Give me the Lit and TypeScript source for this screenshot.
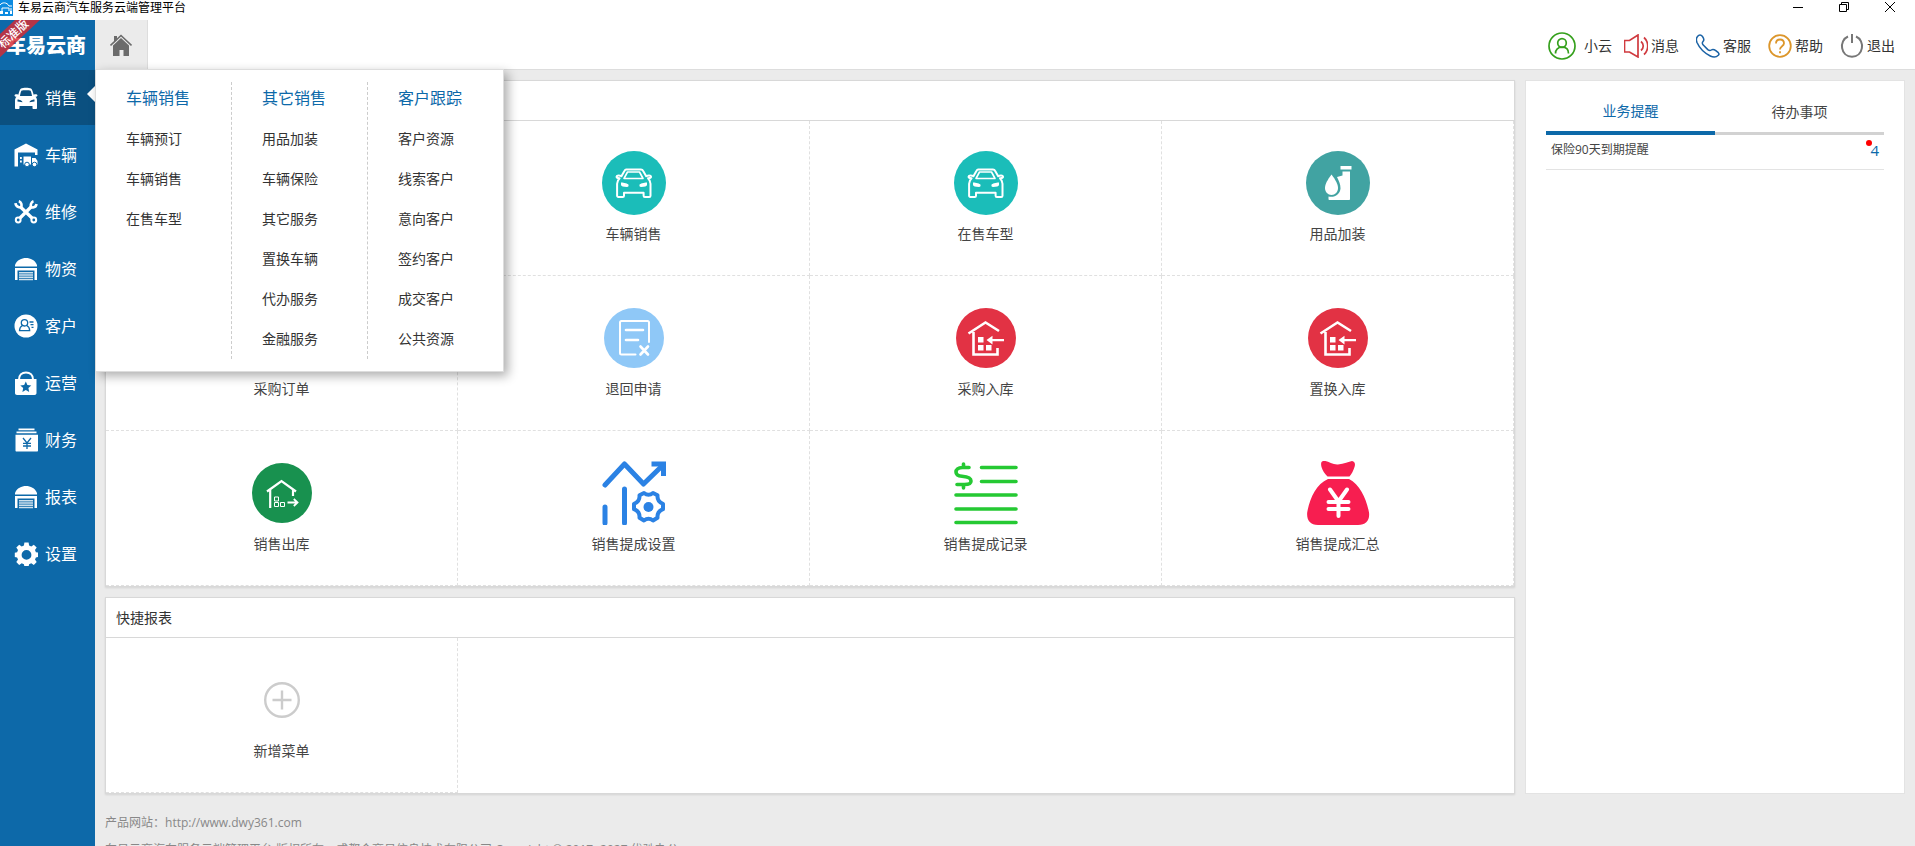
import { LitElement, html, css, svg, TemplateResult } from "lit";
import { customElement, state } from "lit/decorators.js";
import { classMap } from "lit/directives/class-map.js";

/* ---------- sidebar icons, drawn on a 24px grid ---------- */
const garage = svg`
  <path fill="#fff" d="M1 8C3 3 7.500 1 12 1s9 2 11 7v1.500H1zM1 11h22v12h-2.500v-9.500h-17V23H1z"/>
  <path stroke="#fff" stroke-width="1.500" d="M5 15.700h14M5 18h14M5 20.300h14M5 22.500h14" opacity=".8"/>`;

const navIcons: Record<string, TemplateResult> = {
  car: svg`<path fill="#fff" fill-rule="evenodd" d="M7 2.500C8 2 10 1.800 12 1.800s4 .2 5 .7c1 .5 2 3.500 2.700 6.200C21.500 8 23.500 8.500 23.500 9.500c0 1-1.200 1.200-2 1.200 1 1 1.500 2 1.500 4V22c0 .6-.4 1-1 1h-2.500c-.6 0-1-.4-1-1v-2h-13v2c0 .6-.4 1-1 1H2c-.6 0-1-.4-1-1v-7.300c0-2 .5-3 1.500-4-.8 0-2-.2-2-1.200 0-1 2-1.500 3.800-.8C5 6 6 3 7 2.500zM7.700 4.500C7 5.200 6.200 8 6 10h12c-.2-2-1-4.800-1.700-5.500-.8-.5-7.800-.5-8.600 0zM3.500 13.500v2l5 .8c0-1.600-3-2.800-5-2.800zm17 0c-2 0-5 1.200-5 2.800l5-.8z"/>`,
  depot: svg`<path fill="#fff" d="M.5 6.500 12 .500l11.500 6V12H21V9.500H4V23.500H.5z"/>
    <path fill="#fff" d="M6 14h1.800v2H6zM6 17.500h1.800v2H6zM9.500 13.500h7.500v8H9.500zM18 15h3.500l2 3v3.500H18z"/>
    <circle cx="13" cy="21.500" r="2.300" fill="#fff" stroke="#0d69a9"/><circle cx="20.500" cy="21.500" r="2.300" fill="#fff" stroke="#0d69a9"/>`,
  tools: svg`<g fill="none" stroke="#fff"><path stroke-width="3.200" d="M6 6.500 18 18M18 6 6 18"/>
    <circle cx="4.200" cy="20" r="2.400" stroke-width="2"/><circle cx="19.800" cy="20" r="2.400" stroke-width="2"/>
    <path stroke-width="2.600" d="M1.500 3.200C1.800 7.500 6.800 8 7.300 6.500S7.500 2 4.800 1.200M22.500 4C22 8 17.500 8 17 6.500S17 2 19.500 1.200"/></g>`,
  garage,
  client: svg`<circle cx="12" cy="12" r="11.500" fill="#fff"/>
    <g fill="none" stroke="#0d69a9" stroke-width="1.300"><circle cx="10.500" cy="8.800" r="3.200"/>
    <path d="M8.500 11.500c-2 1-3 2.800-3 5.200h10.200c0-2.400-1-4.200-3-5.200M15.500 8h4M16.500 10.700h3M17.500 13.400h2"/></g>`,
  bag: svg`<path fill="none" stroke="#fff" stroke-width="2" d="M5 8.500C5 4 8 1.500 12 1.500s7 2.500 7 7"/>
    <path fill="#fff" d="M1 8h21.500v14c0 1.200-.8 2-2 2H3c-1.200 0-2-.8-2-2z"/>
    <path fill="#0d69a9" d="m11.800 10.500 1.600 3.600 3.900.4-2.900 2.600.8 3.900-3.400-2-3.400 2 .8-3.900-2.900-2.600 3.900-.4z"/>`,
  money: svg`<path fill="#fff" d="M4.500.5h16v1.800h-16zM2.500 3.500h20v1.800h-20zM1.500 6.700h22.500v15.800c0 .6-.4 1-1 1H2.500c-.6 0-1-.4-1-1z"/>
    <path fill="none" stroke="#0d69a9" stroke-width="1.300" d="m9 10 4 5 4-5M13 15v6M9 15.300h8M9 18h8"/>`,
  gear: svg`<path fill="#fff" fill-rule="evenodd" d="M10.400.5h4.200l.5 3 2.200.9 2.500-1.700 2.900 2.900-1.700 2.500.9 2.200 2.600.4v4.200l-2.600.5-.9 2.200 1.700 2.500-2.900 2.900-2.500-1.700-2.200.9-.5 2.300h-4.200l-.5-2.300-2.200-.9-2.500 1.700-2.900-2.900L4 17.600l-.9-2.200L.8 15v-4.200l2.300-.5L4 8.100 2.300 5.600l2.900-2.900 2.500 1.700 2.200-.9zM12.500 8a4.900 4.900 0 1 0 0 9.800 4.900 4.900 0 0 0 0-9.800z"/>`,
};

/* ---------- shortcut icons, drawn on a 64px grid ---------- */
const tealCar = svg`<circle cx="32" cy="32" r="32" fill="#1bbdb9"/>
  <g fill="none" stroke="#fff" stroke-width="2" stroke-linejoin="round">
    <path d="M24 18.500h15c1 0 1.700.5 2.200 1.500l3 5.200c1.800-1 4.500-1 4.800.3.300 1.500-1.200 1.500-3 1.700 2.300 2.300 2.500 3 2.500 5.500v12c0 .7-.5 1.200-1.200 1.200h-4.500c-.7 0-1.200-.5-1.200-1.200v-3H22v3c0 .7-.5 1.200-1.200 1.200h-4.500c-.7 0-1.200-.5-1.200-1.200v-12c0-2.500.2-3.200 2.500-5.500-1.800-.2-3.300-.2-3-1.700.3-1.300 3-1.300 4.800-.3l3-5.200c.5-1 1.100-1.500 1.800-1.500z"/>
    <path d="M25.500 21h12l3.500 6.500H22z" stroke-width="1.600"/></g>
  <path fill="#fff" d="M19 31.500c3 .2 7 1 7.500 2.200.3 1.300-.3 2.300-1.500 2.300-3.500 0-6-.8-6-2zM45 31.500c-3 .2-7 1-7.500 2.200-.3 1.300.3 2.300 1.500 2.300 3.500 0 6-.8 6-2z"/>`;

const houseIn = svg`<circle cx="32" cy="32" r="30" fill="#e23244"/>
  <path fill="none" stroke="#fff" stroke-width="2.600" d="M14.500 27.500 31.500 16.500 45 25M19.500 26v22.500h24V42"/>
  <path fill="#fff" d="M24 31h5.500v5.500H24zM24 39h5.500v5.500H24zM32 39h5.500v5.500H32zM32.500 34l6-4.300v3.200H50v2.300H38.500v3.200z"/>`;

const tileIcons: Record<string, TemplateResult> = {
  tealCar,
  houseIn,
  oil: svg`<circle cx="32" cy="32" r="32" fill="#41a3a2"/>
    <path fill="#fff" d="M34.500 15h11v3.500h-11zM36.500 20.500H44V48c0 .6-.4 1-1 1H23.500c-.6 0-1-.4-1-1v-2.500c6 1.500 11.500-2 12-8 0-4-1.500-7.500-3.500-11.500l5.500-1.500z"/>
    <path fill="#fff" d="M25.500 23.500c4 5.500 6.500 9.500 6.500 13.500s-2.900 7-6.500 7-6.500-3-6.500-7 2.500-8 6.500-13.500z"/>`,
  order: svg`<circle cx="32" cy="32" r="30" fill="#8fc8f7"/><path fill="none" stroke="#fff" stroke-width="2" d="M18 15h28v33H18zM24 24h16M24 32h16"/>`,
  refund: svg`<circle cx="32" cy="32" r="30" fill="#8fc8f7"/>
    <g fill="none" stroke="#fff" stroke-linecap="round"><path stroke-width="2" d="M33.500 48.500H19.500c-.8 0-1.500-.7-1.500-1.500V16.500c0-.8.7-1.500 1.500-1.500h26c.8 0 1.500.7 1.500 1.500V36"/>
    <path stroke-width="2.600" d="M24 24h17M24 34h12M38.500 40.500l7.500 8M46 40.500l-7.500 8"/></g>`,
  houseOut: svg`<circle cx="32" cy="32" r="30" fill="#18914f"/>
    <path fill="none" stroke="#fff" stroke-width="2.200" d="M17 30.500 31.500 20 46 30.500M20.200 29v18M43 29v6"/>
    <path fill="none" stroke="#fff" stroke-width="1" d="M24.500 36h4v4h-4zM24.500 41.500h4v4h-4zM30.500 41.500h4v4h-4z"/>
    <path fill="none" stroke="#fff" stroke-width="1.800" d="M37.500 41.500H47.500M43.800 38l3.700 3.500-3.700 3.500"/>`,
  trend: svg`<g fill="none" stroke="#2b82e4" stroke-linecap="round" stroke-width="5">
    <path stroke-linejoin="round" d="M3 24 22.500 3 41.500 23 60 5"/><path stroke-linecap="butt" d="M49.500 3h12v12"/>
    <path d="M3 46v16M22.500 28v34"/>
    <path stroke-width="4" stroke-linejoin="round" d="M42 28.500q4.500 3.500 9 0l4.500 2.300q-.5 6.500 5.500 8.500v5.400q-6 2.300-5.500 8.500l-4.500 2.800q-4.500-3.500-9 0l-4.500-2.800q.5-6.200-5.500-8.500v-5.400q6-2 5.500-8.500z" transform="translate(0 3.500)"/></g>
    <circle cx="46.500" cy="46" r="5" fill="#2b82e4"/>`,
  ledger: svg`<g fill="none" stroke="#25c933" stroke-linecap="round" stroke-width="3.600">
    <path d="M27.500 6.500H62M27.500 20.500H62M2 34h60M2 48h60M2 61.500h60"/>
    <path d="M15 6.500H8.500C4 6.500 2 8.500 2 11s2 4 6 4.300c5.500.4 9 1.500 9 4.700s-2.500 3.500-6.500 3.500H3M9.500 3v3.500M9.500 23.500V27"/></g>`,
  sack: svg`<path fill="#f71e50" d="M17 0c4-1 9 4 15 3.500S43 .500 46 0c3 .5 3.500 3 2.500 6-1 3.500-3 7-5 9.500h-22c-3-3-5-6-6-9.500-.8-3-.5-5.500 1.500-6zM22 18h21c11 5.500 17.500 20 20 33.500C64 59 60 64 52 64H12C4 64 .500 59 1.200 51.500 3.500 38 10 23 22 18z"/>
    <path fill="none" stroke="#fff" stroke-width="4" stroke-linecap="round" d="m24 28.500 8.500 12 8.500-12M32.500 41v14M22.500 41h20M22.500 48h20"/>`,
  plus: svg`<g fill="none" stroke="#ccc" stroke-width="2.400"><circle cx="32" cy="32" r="16.800"/><path d="M22.500 32h19M32 22.500v19"/></g>`,
};

const toolIcons: Record<string, TemplateResult> = {
  user: svg`<g fill="none" stroke="#35a01c" stroke-width="1.700"><circle cx="14" cy="14" r="13"/><circle cx="14" cy="11" r="4.300"/>
    <path d="M7.500 21.500c0-4 2.500-6.300 6.500-6.300s6.500 2.300 6.500 6.300"/></g>`,
  sound: svg`<path fill="none" stroke="#d03a3f" stroke-width="1.700" d="M.5 6.500h5L14 1v22L5.500 18H.5zM17 7.500c3 2.500 3 6.500 0 9M20 3.500c5 4.500 5 12.500 0 17"/>`,
  phone: svg`<path fill="none" stroke="#1a62a5" stroke-width="1.500" stroke-linejoin="round" d="M1.500 2.500C3 .500 5 .500 6.500 2.500s2 3.500.5 5c-1 1-1 1.800 0 3.300l4.800 4.800c1.500 1.200 2.500 1.200 3.500.4 1.500-1 3-.5 4.500.7l2.500 2c1 1 .8 1.800 0 2.600-2 2-5 2.200-8 .7C7.500 18.500 3 13 1 8.500 0 6 .2 4 1.500 2.500z"/>`,
  help: svg`<g fill="none" stroke="#dc962b" stroke-width="1.800"><circle cx="12" cy="12" r="10.800"/><path d="M8 9.500C8 7 9.500 5.500 12 5.500s4 1.500 4 3.800c0 3-4 3-4 6.200M12 17.300v2"/></g>`,
  power: svg`<path fill="none" stroke="#777" stroke-width="2" d="M8 2.500C-1.500 6.500.5 22.700 12 22.700S25.500 6.500 16 2.500M12 0v9"/>`,
};

const navItems = [
  ["car", "销售"], ["depot", "车辆"], ["tools", "维修"], ["garage", "物资"], ["client", "客户"],
  ["bag", "运营"], ["money", "财务"], ["garage", "报表"], ["gear", "设置"],
];

const submenu = [
  { title: "车辆销售", links: ["车辆预订", "车辆销售", "在售车型"] },
  { title: "其它销售", links: ["用品加装", "车辆保险", "其它服务", "置换车辆", "代办服务", "金融服务"] },
  { title: "客户跟踪", links: ["客户资源", "线索客户", "意向客户", "签约客户", "成交客户", "公共资源"] },
];

const shortcuts = [
  ["tealCar", "车辆预订"], ["tealCar", "车辆销售"], ["tealCar", "在售车型"], ["oil", "用品加装"],
  ["order", "采购订单"], ["refund", "退回申请"], ["houseIn", "采购入库"], ["houseIn", "置换入库"],
  ["houseOut", "销售出库"], ["trend", "销售提成设置"], ["ledger", "销售提成记录"], ["sack", "销售提成汇总"],
];

const tools = [["sound", "消息"], ["phone", "客服"], ["help", "帮助"], ["power", "退出"]];

@customElement("app-root")
export class AppRoot extends LitElement {
  @state() private activeNav = 0;
  @state() private activeTab = 0;

  static styles = css`
    :host {
      display: flex;
      flex-direction: column;
      height: 100vh;
      overflow: hidden;
      background: #ebebeb;
      color: #333;
      font: 14px/20px "Open Sans", "Noto Sans CJK SC", sans-serif;
    }
    * { box-sizing: border-box; }
    button { border: 0; padding: 0; background: none; font: inherit; color: inherit; cursor: pointer; }
    a { color: inherit; text-decoration: none; }
    h2, h3, p, ul { margin: 0; padding: 0; font-weight: 400; font-size: inherit; list-style: none; }
    svg { display: block; flex: none; }

    .titlebar { display: flex; align-items: center; flex: none; height: 20px; background: #fff; color: #000; font-size: 12px; line-height: 16px; }
    .titlebar .name { flex: 1; padding-left: 5px; padding-bottom: 4px; }
    .titlebar .brand { width: 13px; height: 16px; align-self: flex-start; }
    .win { display: flex; gap: 1px; align-self: flex-start; padding-right: 3px; }
    .win button { width: 45px; height: 14px; display: flex; align-items: center; justify-content: center; }

    .shell { display: flex; flex: 1; min-height: 0; }

    .sidebar { position: relative; z-index: 2; flex: none; width: 95px; background: #0d69a9; color: #fff; }
    .logo { position: relative; display: flex; align-items: center; justify-content: flex-end; height: 50px; padding: 2px 9px 0 0; overflow: hidden; font-size: 20px; line-height: 28px; font-weight: 900; }
    .ribbon { position: absolute; left: -32px; top: 5px; width: 90px; background: rgba(212, 43, 53, 0.84); color: #fff; font-size: 12px; line-height: 17px; font-weight: 500; text-align: center; transform: rotate(-43deg); }
    .nav li { margin-bottom: 2px; }
    .nav button { position: relative; display: flex; align-items: center; gap: 7px; width: 100%; height: 55px; padding-left: 14px; font-size: 16px; line-height: 24px; }
    .nav .on { background: #0b5080; }
    .nav .on::after { content: ""; position: absolute; right: 0; top: 16px; border: 8px solid transparent; border-left: 0; border-right-color: #fff; }

    .submenu { position: absolute; left: 95px; top: 49px; display: flex; padding: 12px 0; background: #fff; border: 1px solid #ddd; box-shadow: 4px 4px 10px rgba(0, 0, 0, 0.32); color: #333; }
    .submenu section { width: 136px; padding-left: 30px; border-right: 1px dashed #ccc; }
    .submenu section:last-child { width: 135px; border-right: 0; }
    .submenu h3 { margin-bottom: 5px; font-size: 16px; line-height: 32px; color: #0d69a9; }
    .submenu a { display: block; line-height: 40px; }

    .page { display: flex; flex-direction: column; flex: 1; min-width: 0; }
    .header { display: flex; justify-content: space-between; flex: none; height: 50px; background: #fff; border-bottom: 1px solid #ddd; padding-right: 20px; }
    .home { display: flex; align-items: center; justify-content: center; width: 53px; background: #ebebeb; border-right: 1px solid #ddd; }
    .account { display: flex; align-items: center; gap: 12px; padding-top: 2px; }
    .tools { display: flex; gap: 17px; }
    .account button { display: flex; align-items: center; gap: 3px; }
    .account .user { gap: 8px; }

    .content { flex: 1; min-height: 0; padding: 10px; overflow-y: auto; scrollbar-width: none; }
    .board { display: grid; grid-template-columns: minmax(0, 1fr) 380px; gap: 10px; }
    .stack { display: flex; flex-direction: column; gap: 10px; }
    .panel { background: #fff; border: 1px solid #d8d8d8; box-shadow: 0 1px 2px rgba(0, 0, 0, 0.1); }
    .panel h2 { padding: 0 10px; line-height: 39px; border-bottom: 1px solid #d8d8d8; }
    .grid { display: grid; grid-template-columns: repeat(4, minmax(0, 1fr)); }
    .tile { display: flex; flex-direction: column; align-items: center; gap: 9px; padding: 30px 0 31px; border-right: 1px dashed #e0e0e0; border-bottom: 1px dashed #e0e0e0; color: #444; }

    .side { background: #fff; border: 1px solid #e3e3e3; padding: 11px 20px; }
    .tabs { display: flex; align-items: flex-end; }
    .tabs button { flex: 1; height: 42px; padding-bottom: 2px; border-bottom: 3px solid #d2d2d2; color: #444; }
    .tabs .on { height: 43px; border-bottom: 4px solid #0d69a9; color: #0d69a9; }
    .remind { display: flex; align-items: center; justify-content: space-between; height: 35px; padding: 0 5px 4px; border-bottom: 1px solid #e3e3e3; font-size: 12px; color: #444; }
    .count { position: relative; font-size: 15px; color: #0d69a9; }
    .count::before { content: ""; position: absolute; left: -4px; top: 0; width: 6px; height: 6px; border-radius: 50%; background: #f00; }
    .footer { padding-top: 15px; font-size: 12px; line-height: 27px; color: #888; }
  `;

  private renderSubmenu() {
    return html`<nav class="submenu" aria-label="销售">
      ${submenu.map((g) => html`<section><h3>${g.title}</h3>${g.links.map((l) => html`<a href="#">${l}</a>`)}</section>`)}
    </nav>`;
  }

  private renderTile([icon, label]: string[]) {
    return html`<a class="tile" href="#"><svg width="64" height="64" viewBox="0 0 64 64">${tileIcons[icon]}</svg><span>${label}</span></a>`;
  }

  render() {
    return html`
      <div class="titlebar">
        <svg class="brand" viewBox="0 0 13 16"><path fill="#0d8be0" d="M0 0h13v16H0z"/>
          <path fill="none" stroke="#fff" d="M0 5c2-3 7-3 9 1h3M2 11V8h7v3M11 8v4"/><path fill="#fff" d="M0 11h3v3H0zM5 12h3v2H5zM10 11h2v3h-2z"/></svg>
        <span class="name">车易云商汽车服务云端管理平台</span>
        <div class="win">
          <button aria-label="最小化"><svg width="12" height="12"><path stroke="#000" d="M1 6.500h10"/></svg></button>
          <button aria-label="还原"><svg width="12" height="12"><path fill="none" stroke="#000" d="M1.500 3.500h7v7h-7zM3.500 3.500v-2h7v7h-2"/></svg></button>
          <button aria-label="关闭"><svg width="12" height="12"><path stroke="#000" d="m1 1 10 10M11 1 1 11"/></svg></button>
        </div>
      </div>
      <div class="shell">
        <aside class="sidebar">
          <div class="logo">车易云商<span class="ribbon">标准版</span></div>
          <ul class="nav">
            ${navItems.map(([icon, label], i) => html`<li>
              <button class=${classMap({ on: i === this.activeNav })} @click=${() => (this.activeNav = i)}>
                <svg width="24" height="24" viewBox="0 0 24 24">${navIcons[icon]}</svg>${label}
              </button></li>`)}
          </ul>
          ${this.activeNav === 0 ? this.renderSubmenu() : ""}
        </aside>
        <div class="page">
          <header class="header">
            <button class="home" aria-label="首页">
              <svg width="22" height="22" viewBox="0 0 22 22"><path fill="none" stroke="#6b6b6b" stroke-width="1.600" d="M.5 11.500 11 1.500l10.500 10"/>
                <path fill="#6b6b6b" d="M3 11.500 11 4l8 7.500V22h-5.500v-6h-4v6H3zM4 2h3v4L4 8.500z"/></svg>
            </button>
            <div class="account">
              <button class="user"><svg width="28" height="28" viewBox="0 0 28 28">${toolIcons.user}</svg>小云</button>
              <div class="tools">
                ${tools.map(([icon, label]) => html`<button><svg width="24" height="24" viewBox="0 0 24 24">${toolIcons[icon]}</svg>${label}</button>`)}
              </div>
            </div>
          </header>
          <main class="content">
            <div class="board">
              <div class="stack">
                <section class="panel"><h2>快捷菜单</h2><div class="grid">${shortcuts.map((s) => this.renderTile(s))}</div></section>
                <section class="panel"><h2>快捷报表</h2><div class="grid">${this.renderTile(["plus", "新增菜单"])}</div></section>
              </div>
              <aside class="side">
                <div class="tabs" role="tablist">
                  ${["业务提醒", "待办事项"].map((t, i) => html`<button role="tab" aria-selected=${i === this.activeTab}
                    class=${classMap({ on: i === this.activeTab })} @click=${() => (this.activeTab = i)}>${t}</button>`)}
                </div>
                <div class="remind"><span>保险90天到期提醒</span><a class="count" href="#">4</a></div>
              </aside>
            </div>
            <footer class="footer">
              <p>产品网站：<a href="http://www.dwy361.com">http://www.dwy361.com</a></p>
              <p>车易云商汽车服务云端管理平台 版权所有：成都合商易信息技术有限公司 Copyright © 2017 -2027 优驰办公</p>
            </footer>
          </main>
        </div>
      </div>`;
  }
}
